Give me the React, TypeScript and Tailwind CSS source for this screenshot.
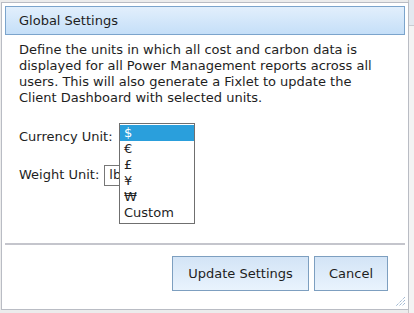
import React from 'react';

const currencies = ['$', '€', '£', '¥', '₩', 'Custom'];

export default function App() {
  return (
    <div
      className="relative w-[414px] h-[313px] overflow-hidden bg-[#ececec] text-[13px] text-[#1e1e1e]"
      style={{ fontFamily: '"DejaVu Sans", Verdana, sans-serif' }}
    >
      {/* page behind the dialog */}
      <div className="absolute right-0 top-0 w-[6px] h-full bg-[#f3f3f3] border-l border-[#c8c8c8]">
        <div className="h-[26px] bg-[#e3e9f0] border-b border-[#c8ccd2]" />
      </div>

      {/* Dialog */}
      <div className="relative ml-[1px] mt-[2px] w-[408px] h-[308px] border border-[#b9bcc4] bg-white flex flex-col p-[3px]">
        {/* Header */}
        <div className="h-[29px] border border-[#7ba4cc] bg-gradient-to-b from-[#e2effc] to-[#c5dff8] flex items-center pl-[13px]">
          Global Settings
        </div>

        {/* Content */}
        <div className="pl-[14px] pr-[20px] pt-[7px] leading-[16px]">
          <p>
            Define the units in which all cost and carbon data is displayed for all Power Management reports across all
            users. This will also generate a Fixlet to update the Client Dashboard with selected units.
          </p>
          <div className="mt-[20px] flex items-center h-[22px]">
            <span>Currency Unit:</span>
          </div>
          <div className="mt-[16px] flex items-center h-[22px] gap-[5px]">
            <span>Weight Unit:</span>
            <div className="w-[40px] h-[21px] border border-[#777] flex items-center pl-[4px]">lb</div>
          </div>
        </div>

        {/* Separator */}
        <div className="mt-auto mb-[11px] h-[2px] bg-[#c4c5cc]" />

        {/* Footer */}
        <div className="flex justify-end gap-[5px] pr-[17px] mb-[15px]">
          <button className="w-[137px] h-[35px] border border-[#7d9fc0] bg-gradient-to-b from-[#d3e4f6] to-[#e9f3fd]">
            Update Settings
          </button>
          <button className="w-[74px] h-[35px] border border-[#7d9fc0] bg-gradient-to-b from-[#d3e4f6] to-[#e9f3fd]">
            Cancel
          </button>
        </div>

        {/* Resize grip */}
        <svg className="absolute right-[2px] bottom-[2px]" width="12" height="12" viewBox="0 0 12 12">
          <path d="M11 2L2 11M11 5L5 11M11 8L8 11" stroke="#7a9cc0" strokeWidth="1" strokeDasharray="1 1" />
        </svg>
      </div>

      {/* Open currency list */}
      <div className="absolute left-[119px] top-[123px] w-[76px] h-[101px] border border-[#6f6f6f] bg-white pt-[1px] leading-[16px]">
        {currencies.map((c, i) => (
          <div
            key={c}
            className={i === 0 ? 'h-[16px] pl-[4px] bg-[#2a9fdc] text-white' : 'h-[16px] pl-[4px]'}
          >
            {c}
          </div>
        ))}
      </div>
    </div>
  );
}
